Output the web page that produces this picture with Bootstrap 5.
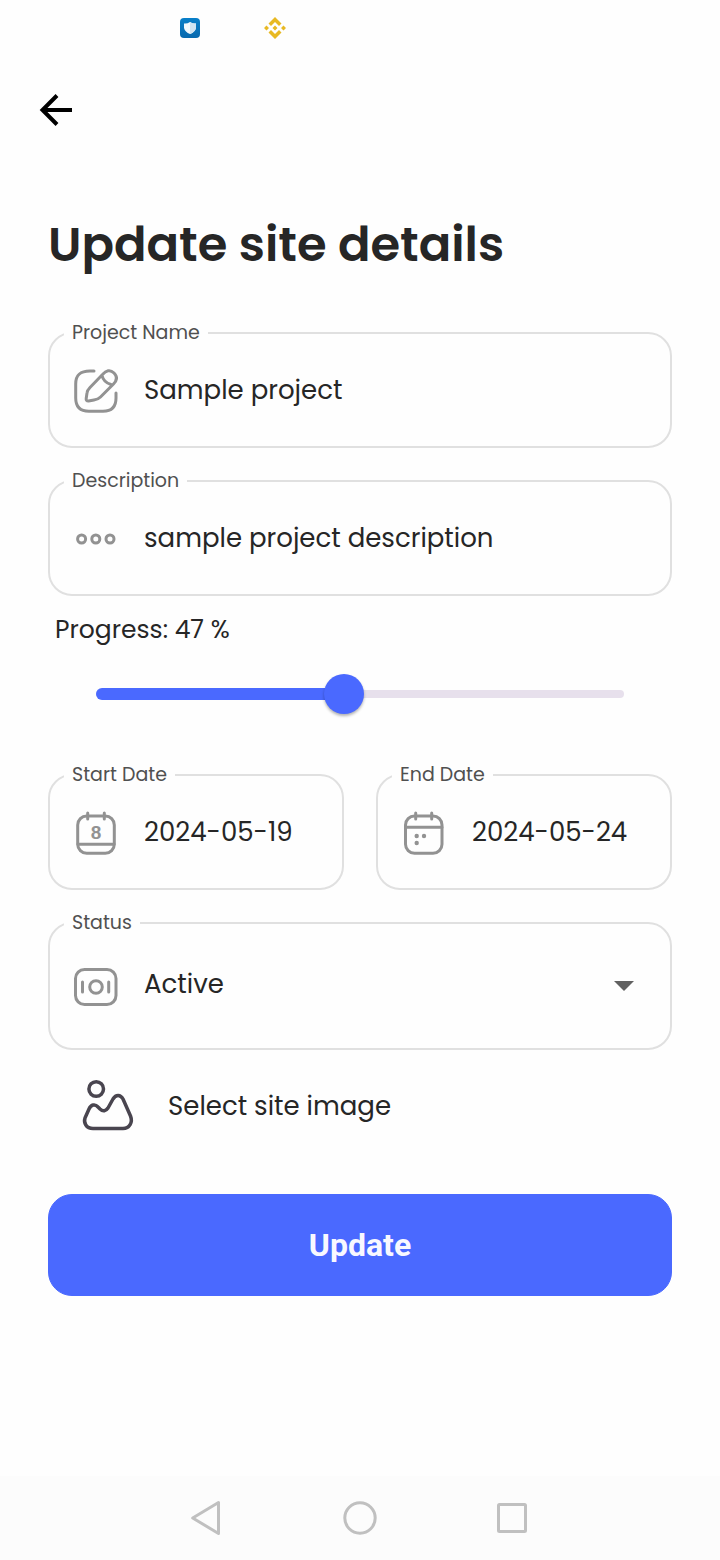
<!DOCTYPE html>
<html lang="en">
<head>
<meta charset="utf-8">
<meta name="viewport" content="width=device-width, initial-scale=1">
<title>Update site details</title>
<link href="https://cdn.jsdelivr.net/npm/bootstrap@5.3.0/dist/css/bootstrap.min.css" rel="stylesheet">
<style>
  :root { --brand: #4a69ff; --ink: #262626; --line: #e0e0e0; --muted-icon: #929292; }
  body { background: #fefefe; color: var(--ink); font-family: Poppins, Inter, "Noto Sans", sans-serif; font-size: 26px; line-height: 36px; }
  .status-icons { height: 56px; padding-left: 180px; gap: 64px; }
  .app-bar { height: 108px; padding: 0 32px; }
  .app-main { padding: 45px 48px 0; }
  h1 { font-size: 48px; line-height: 72px; font-weight: 600; margin: 0 0 40px; }
  .outlined { border: 2px solid var(--line); border-radius: 24px; padding: 0 22px 11px; margin-bottom: 21px; }
  .outlined legend { font-size: 19px; line-height: 24px; color: #505050; margin: 0 0 0 -8px; padding: 0 8px; }
  .field-row { height: 90px; gap: 24px; }
  .field-row.tall { height: 102px; }
  .field-row svg { flex: none; color: var(--muted-icon); }
  .field-row input, .field-row select { border: 0; padding: 0; background: transparent; color: inherit; min-width: 0; width: 100%; outline: 0; appearance: none; }
  .field-row select { padding-bottom: 4px; }
  .field-row .caret-icon { right: 14px; color: #616161; pointer-events: none; }
  .dates { --bs-gutter-x: 32px; }
  .progress-label { font-size: 25px; margin: -5px 7px 26px; }
  .slider-box { height: 40px; margin: 0 48px 49px; }
  .slider-rail { height: 8px; border-radius: 4px; background: #e7e0ec; }
  .slider-fill { height: 12px; border-radius: 6px; background: var(--brand); }
  .slider-box input { left: -20px; width: calc(100% + 40px); height: 40px; margin: 0; appearance: none; background: transparent; }
  .slider-box input::-webkit-slider-thumb { appearance: none; width: 40px; height: 40px; border-radius: 50%; background: var(--brand); box-shadow: 0 2px 3px rgba(0,0,0,.3); }
  .pick-image { margin-top: 28px; padding: 0 32px; gap: 32px; border: 0; background: none; color: inherit; }
  .pick-image svg { color: #49454f; }
  .btn-update { margin-top: 60px; height: 102px; border-radius: 24px; font: 700 32px/40px Roboto, sans-serif; --bs-btn-bg: var(--brand); --bs-btn-border-color: var(--brand); --bs-btn-color: #f8f8ff; --bs-btn-hover-bg: #3c5bf0; }
  .system-nav { height: 84px; gap: 104px; background: #fcfcfc; color: #c0c0c0; }
  .plain-btn { border: 0; padding: 0; background: none; color: inherit; line-height: 0; }
</style>
</head>
<body class="d-flex flex-column min-vh-100">
<header>
  <div class="status-icons d-flex align-items-center">
    <svg width="20" height="20" viewBox="0 0 20 20" aria-hidden="true">
      <defs><linearGradient id="blue" x2="0" y2="1"><stop stop-color="#087fc9"/><stop offset="1" stop-color="#0869ae"/></linearGradient></defs>
      <rect width="20" height="20" rx="4" fill="url(#blue)"/>
      <path d="M10 4Q13 6 16 5.500V10Q15 14 10 16Q5 14 4 10V5.500Q7 6 10 4Z" fill="#f0f8fd"/>
      <path d="M10 4Q13 6 16 5.500V10Q15 14 10 16Z" fill="#cfe4f2"/>
    </svg>
    <svg width="22" height="22" viewBox="0 0 22 22" fill="#e8b923" aria-hidden="true">
      <path d="M11 0 17.500 6.500 15 9 11 5 7 9 4.500 6.500ZM11 22 17.500 15.500 15 13 11 17 7 13 4.500 15.500ZM11 8.500 13.500 11 11 13.500 8.500 11ZM2.500 8.500 5 11 2.500 13.500 0 11ZM19.500 8.500 22 11 19.500 13.500 17 11Z"/>
    </svg>
  </div>
  <div class="app-bar d-flex align-items-center">
    <button class="plain-btn" type="button" aria-label="Back">
      <svg width="48" height="48" viewBox="0 0 48 48" fill="none" stroke="#000" stroke-width="4"><path d="M40 24H11M25 9.500 10.500 24 25 38.500"/></svg>
    </button>
  </div>
</header>

<main class="app-main">
  <h1>Update site details</h1>
  <form>
    <fieldset class="outlined">
      <legend class="float-none w-auto"><label for="name">Project Name</label></legend>
      <div class="field-row d-flex align-items-center">
        <svg width="48" height="48" viewBox="0 0 48 48" fill="none" stroke="currentColor" stroke-width="3" stroke-linecap="round" stroke-linejoin="round" aria-hidden="true">
          <path d="M22 5H18C8 5 3.700 9 3.700 18V32C3.700 41 8 45.300 17 45.300H31C40 45.300 44 41 44 32V27"/>
          <path d="M30.500 8.500C34 4.500 38 3 42 7S45 14.500 41.500 18L28.500 31C26.500 33 25 33.600 22 34L16.500 35C14.500 35 14 34 14.200 32.500L15 27C15.300 24.500 16 23.500 18 21.500ZM30 9.500C31 14 34 17 39 18.500"/>
        </svg>
        <input id="name" type="text" value="Sample project">
      </div>
    </fieldset>

    <fieldset class="outlined">
      <legend class="float-none w-auto"><label for="desc">Description</label></legend>
      <div class="field-row d-flex align-items-center">
        <svg width="48" height="48" viewBox="0 0 48 48" fill="none" stroke="currentColor" stroke-width="3" aria-hidden="true"><circle cx="9.600" cy="25" r="4"/><circle cx="23.800" cy="25" r="4"/><circle cx="38" cy="25" r="4"/></svg>
        <input id="desc" type="text" value="sample project description">
      </div>
    </fieldset>

    <label class="progress-label d-block" for="progress">Progress: <output id="pct" class="p-0">47</output> %</label>
    <div class="slider-box position-relative d-flex align-items-center">
      <div class="slider-rail w-100 d-flex align-items-center">
        <div class="slider-fill" id="fill" style="width:47%"></div>
      </div>
      <input id="progress" class="position-absolute" type="range" min="0" max="100" value="47">
    </div>

    <div class="row dates">
      <div class="col-6">
        <fieldset class="outlined">
          <legend class="float-none w-auto"><label for="start">Start Date</label></legend>
          <div class="field-row d-flex align-items-center">
            <svg width="48" height="48" viewBox="0 0 48 48" fill="none" stroke="currentColor" stroke-width="3" stroke-linecap="round" aria-hidden="true">
              <rect x="5.700" y="8" width="36.600" height="37.300" rx="9"/><path d="M6 36.300H42M15.700 5V11M32.300 5V11"/>
              <text x="24" y="31" text-anchor="middle" font-family="Liberation Sans, sans-serif" font-size="19" font-weight="700" fill="currentColor" stroke="none">8</text>
            </svg>
            <input id="start" type="text" value="2024-05-19">
          </div>
        </fieldset>
      </div>
      <div class="col-6">
        <fieldset class="outlined">
          <legend class="float-none w-auto"><label for="end">End Date</label></legend>
          <div class="field-row d-flex align-items-center">
            <svg width="48" height="48" viewBox="0 0 48 48" fill="none" stroke="currentColor" stroke-width="3" stroke-linecap="round" aria-hidden="true">
              <rect x="5.500" y="8" width="36.500" height="37.300" rx="9"/><path d="M6 19.300H42M15.700 5V11M31.700 5V11"/>
              <g fill="currentColor" stroke="none"><circle cx="16.700" cy="28" r="2.200"/><circle cx="24" cy="28" r="2.200"/><circle cx="16.700" cy="35" r="2.200"/></g>
            </svg>
            <input id="end" type="text" value="2024-05-24">
          </div>
        </fieldset>
      </div>
    </div>

    <fieldset class="outlined mb-0">
      <legend class="float-none w-auto"><label for="status">Status</label></legend>
      <div class="field-row tall d-flex align-items-center position-relative">
        <svg width="48" height="48" viewBox="0 0 48 48" fill="none" stroke="currentColor" stroke-width="3" stroke-linecap="round" aria-hidden="true">
          <rect x="3.500" y="7.500" width="40.500" height="35" rx="9"/><circle cx="24" cy="25" r="6.300"/><path d="M10.500 20V30M36.700 20V30"/>
        </svg>
        <select id="status"><option>Active</option><option>Inactive</option></select>
        <svg class="caret-icon position-absolute" width="20" height="10" viewBox="0 0 20 10" fill="currentColor" aria-hidden="true"><path d="M0 0H20L10 10Z"/></svg>
      </div>
    </fieldset>

    <button class="pick-image d-flex align-items-center" type="button">
      <svg width="56" height="56" viewBox="0 0 56 56" fill="none" stroke="currentColor" stroke-width="3.500" stroke-linejoin="round" aria-hidden="true">
        <circle cx="16.200" cy="11" r="7.300"/>
        <path d="M13 50.500C6 50.500 3.500 44.500 5 40L9 31C11 26.500 15 25.500 18 29L20 31C23 33.800 26 33 28 30L33 21C36 16 40.500 16.500 43 21L50.500 38C53 44.500 49.500 50.500 43 50.500Z"/>
      </svg>
      Select site image
    </button>

    <button class="btn btn-primary btn-update w-100" type="submit">Update</button>
  </form>
</main>

<nav class="system-nav mt-auto d-flex justify-content-center align-items-center" aria-label="System">
  <button class="plain-btn" type="button" aria-label="Back"><svg width="48" height="48" viewBox="0 0 48 48" fill="none" stroke="currentColor" stroke-width="3" stroke-linejoin="round"><path d="M8.700 24 34.500 8.500V39.500Z"/></svg></button>
  <button class="plain-btn" type="button" aria-label="Home"><svg width="48" height="48" viewBox="0 0 48 48" fill="none" stroke="currentColor" stroke-width="3"><circle cx="24" cy="24" r="15.200"/></svg></button>
  <button class="plain-btn" type="button" aria-label="Recent"><svg width="48" height="48" viewBox="0 0 48 48" fill="none" stroke="currentColor" stroke-width="3"><rect x="10.500" y="10.500" width="27" height="27" rx="1"/></svg></button>
</nav>

<script src="https://cdn.jsdelivr.net/npm/bootstrap@5.3.0/dist/js/bootstrap.bundle.min.js"></script>
<script>
  document.getElementById('progress').addEventListener('input', function (e) {
    document.getElementById('fill').style.width = e.target.value + '%';
    document.getElementById('pct').textContent = e.target.value;
  });
</script>
</body>
</html>
